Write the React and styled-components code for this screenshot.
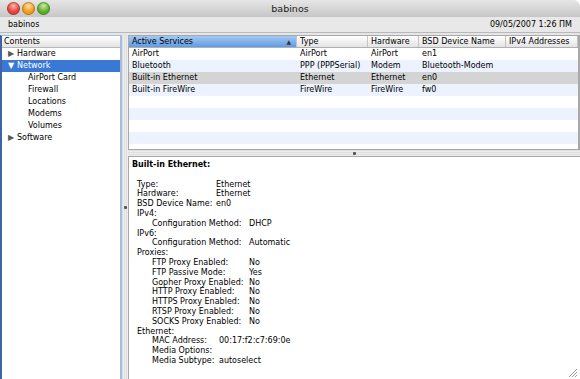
import React from "react";
import styled, { createGlobalStyle } from "styled-components";

const font = `"DejaVu Sans", "Liberation Sans", sans-serif`;

const GlobalStyle = createGlobalStyle`
  html, body {
    margin: 0;
    padding: 0;
    overflow: hidden;
    background: #ffffff;
  }
  * {
    box-sizing: border-box;
  }
`;

const columns = "168px 71px 51px 87px 1fr";

const services = [
  ["AirPort", "AirPort", "AirPort", "en1", ""],
  ["Bluetooth", "PPP (PPPSerial)", "Modem", "Bluetooth-Modem", ""],
  ["Built-in Ethernet", "Ethernet", "Ethernet", "en0", ""],
  ["Built-in FireWire", "FireWire", "FireWire", "fw0", ""],
];

const tree = [
  { label: "Hardware", level: 0, toggle: "closed" },
  { label: "Network", level: 0, toggle: "open", selected: true },
  { label: "AirPort Card", level: 1 },
  { label: "Firewall", level: 1 },
  { label: "Locations", level: 1 },
  { label: "Modems", level: 1 },
  { label: "Volumes", level: 1 },
  { label: "Software", level: 0, toggle: "closed" },
];

const details = [
  {
    indent: 5,
    labelWidth: 79,
    items: [
      ["Type:", "Ethernet"],
      ["Hardware:", "Ethernet"],
      ["BSD Device Name:", "en0"],
    ],
  },
  { heading: "IPv4:" },
  { indent: 20, labelWidth: 97, items: [["Configuration Method:", "DHCP"]] },
  { heading: "IPv6:" },
  { indent: 20, labelWidth: 97, items: [["Configuration Method:", "Automatic"]] },
  { heading: "Proxies:" },
  {
    indent: 20,
    labelWidth: 97,
    items: [
      ["FTP Proxy Enabled:", "No"],
      ["FTP Passive Mode:", "Yes"],
      ["Gopher Proxy Enabled:", "No"],
      ["HTTP Proxy Enabled:", "No"],
      ["HTTPS Proxy Enabled:", "No"],
      ["RTSP Proxy Enabled:", "No"],
      ["SOCKS Proxy Enabled:", "No"],
    ],
  },
  { heading: "Ethernet:" },
  {
    indent: 20,
    labelWidth: 67,
    items: [
      ["MAC Address:", "00:17:f2:c7:69:0e"],
      ["Media Options:", ""],
      ["Media Subtype:", "autoselect"],
    ],
  },
];

function Tree() {
  return (
    <Sidebar>
      <SidebarHeader>Contents</SidebarHeader>
      {tree.map((item) => (
        <TreeRow key={item.label} $selected={item.selected} $level={item.level}>
          {item.toggle && (
            <Disclosure $selected={item.selected}>{item.toggle === "open" ? "▼" : "▶"}</Disclosure>
          )}
          {item.label}
        </TreeRow>
      ))}
    </Sidebar>
  );
}

function ServiceTable() {
  const blanks = [4, 5, 6, 7, 8];
  return (
    <Table>
      <HeaderRow>
        <HeaderCell $active>
          Active Services
          <SortArrow>▲</SortArrow>
        </HeaderCell>
        <HeaderCell>Type</HeaderCell>
        <HeaderCell>Hardware</HeaderCell>
        <HeaderCell>BSD Device Name</HeaderCell>
        <HeaderCell>IPv4 Addresses</HeaderCell>
      </HeaderRow>
      {services.map((row, i) => (
        <Row key={row[0]} $alt={i % 2 === 1} $selected={i === 2}>
          {row.map((cell, j) => (
            <Cell key={j}>{cell}</Cell>
          ))}
        </Row>
      ))}
      {blanks.map((i) => (
        <Row key={i} $alt={i % 2 === 1} />
      ))}
    </Table>
  );
}

function Details() {
  return (
    <Detail>
      <DetailTitle>Built-in Ethernet:</DetailTitle>
      <Spacer />
      {details.map((group, i) =>
        group.heading ? (
          <GroupHeading key={i}>{group.heading}</GroupHeading>
        ) : (
          <Group key={i} $indent={group.indent} $labelWidth={group.labelWidth}>
            {group.items.map(([k, v]) => (
              <React.Fragment key={k}>
                <span>{k}</span>
                <span>{v}</span>
              </React.Fragment>
            ))}
          </Group>
        )
      )}
    </Detail>
  );
}

export default function App() {
  return (
    <>
      <GlobalStyle />
      <Window>
        <TitleBar>
          <Lights>
            <Light $color="#e2413b" $light="#ffb3ab" />
            <Light $color="#f09a1a" $light="#ffe0a0" />
            <Light $color="#5bab2a" $light="#c8f0a0" />
          </Lights>
          <Title>babinos</Title>
        </TitleBar>
        <Toolbar>
          <span>babinos</span>
          <span>09/05/2007 1:26 ПМ</span>
        </Toolbar>
        <Main>
          <Tree />
          <VSplit>
            <Dimple />
          </VSplit>
          <RightPane>
            <ServiceTable />
            <HSplit>
              <Dimple />
            </HSplit>
            <Details />
          </RightPane>
        </Main>
        <Grip viewBox="0 0 12 12" width="12" height="12">
          <path d="M11 3 L3 11 M11 6 L6 11 M11 9 L9 11" stroke="#9a9a9a" strokeWidth="1" />
        </Grip>
      </Window>
    </>
  );
}

const Window = styled.div`
  position: relative;
  width: 580px;
  height: 379px;
  display: flex;
  flex-direction: column;
  font-family: ${font};
  font-size: 8px;
  color: #000;
  background: #e6e6e6;
  border-top-right-radius: 7px;
  overflow: hidden;
`;

const TitleBar = styled.div`
  position: relative;
  height: 17px;
  flex: none;
  display: flex;
  align-items: center;
  justify-content: center;
  background: linear-gradient(#e6e6e6, #c6c6c6);
`;

const Lights = styled.div`
  position: absolute;
  left: 7px;
  top: 2px;
  display: flex;
  gap: 2px;
`;

const Light = styled.div`
  width: 13px;
  height: 13px;
  border-radius: 50%;
  background: radial-gradient(circle at 50% 30%, ${(p) => p.$light} 0, ${(p) => p.$color} 55%);
  box-shadow: inset 0 0 0 1px rgba(0, 0, 0, 0.25);
`;

const Title = styled.div`
  font-size: 9.5px;
  color: #1a1a1a;
`;

const Toolbar = styled.div`
  height: 16px;
  flex: none;
  display: flex;
  align-items: center;
  justify-content: space-between;
  padding: 0 8px;
  background: #e8e8e8;
  border-bottom: 1px solid #b9b9b9;
`;

const Main = styled.div`
  flex: 1;
  display: flex;
  padding-top: 2px;
  min-height: 0;
`;

const Sidebar = styled.div`
  width: 122px;
  flex: none;
  background: #fff;
  border-left: 2px solid #3f63a6;
  border-right: 2px solid #a4bcde;
  border-top: 1px solid #a4bcde;
`;

const SidebarHeader = styled.div`
  height: 12px;
  line-height: 11px;
  padding-left: 2px;
  background: linear-gradient(#ffffff, #e4e4e4);
  border-bottom: 1px solid #b8b8b8;
`;

const TreeRow = styled.div`
  height: 12px;
  line-height: 12px;
  display: flex;
  align-items: center;
  padding-left: ${(p) => (p.$level ? 26 : 6)}px;
  background: ${(p) => (p.$selected ? "#3a78d6" : "transparent")};
  color: ${(p) => (p.$selected ? "#fff" : "#000")};
`;

const Disclosure = styled.span`
  width: 9px;
  font-size: 8px;
  color: ${(p) => (p.$selected ? "#fff" : "#5a5a5a")};
`;

const VSplit = styled.div`
  width: 6px;
  flex: none;
  display: flex;
  align-items: center;
  justify-content: center;
  background: repeating-linear-gradient(90deg, #e0e0e0 0, #e0e0e0 1px, #ececec 1px, #ececec 2px);
`;

const Dimple = styled.div`
  width: 3px;
  height: 3px;
  border-radius: 1px;
  background: #555;
`;

const RightPane = styled.div`
  flex: 1;
  display: flex;
  flex-direction: column;
  min-width: 0;
`;

const Table = styled.div`
  height: 115px;
  flex: none;
  overflow: hidden;
  background: #fff;
  border: 1px solid #a8a8a8;
  border-right-width: 2px;
`;

const HeaderRow = styled.div`
  display: grid;
  grid-template-columns: ${columns};
  height: 12px;
  border-bottom: 1px solid #b0b0b0;
  background: linear-gradient(#ffffff, #e3e3e3);
`;

const HeaderCell = styled.div`
  display: flex;
  align-items: center;
  justify-content: space-between;
  padding: 0 5px 0 3px;
  white-space: nowrap;
  overflow: hidden;
  border-right: 1px solid #c4c4c4;
  background: ${(p) => (p.$active ? "linear-gradient(#a5c8f2, #5e9be4)" : "transparent")};
`;

const SortArrow = styled.span`
  font-size: 6px;
  color: #333;
`;

const Row = styled.div`
  display: grid;
  grid-template-columns: ${columns};
  height: 12px;
  line-height: 12px;
  background: ${(p) => (p.$selected ? "#d4d4d4" : p.$alt ? "#edf3fe" : "#fff")};
`;

const Cell = styled.div`
  padding-left: 3px;
  white-space: nowrap;
  overflow: hidden;
`;

const HSplit = styled.div`
  height: 6px;
  flex: none;
  display: flex;
  align-items: center;
  justify-content: center;
  background: repeating-linear-gradient(#e0e0e0 0, #e0e0e0 1px, #ececec 1px, #ececec 2px);
`;

const Detail = styled.div`
  flex: 1;
  background: #fff;
  border: 1px solid #a8a8a8;
  border-right: none;
  border-bottom: none;
  padding: 3px 0 0 3px;
  line-height: 9.8px;
`;

const DetailTitle = styled.div`
  font-weight: bold;
`;

const Spacer = styled.div`
  height: 9.8px;
`;

const GroupHeading = styled.div`
  padding-left: 5px;
`;

const Group = styled.div`
  display: grid;
  grid-template-columns: ${(p) => p.$labelWidth}px 1fr;
  padding-left: ${(p) => p.$indent}px;
  white-space: nowrap;
`;

const Grip = styled.svg`
  position: absolute;
  right: 2px;
  bottom: 1px;
`;
